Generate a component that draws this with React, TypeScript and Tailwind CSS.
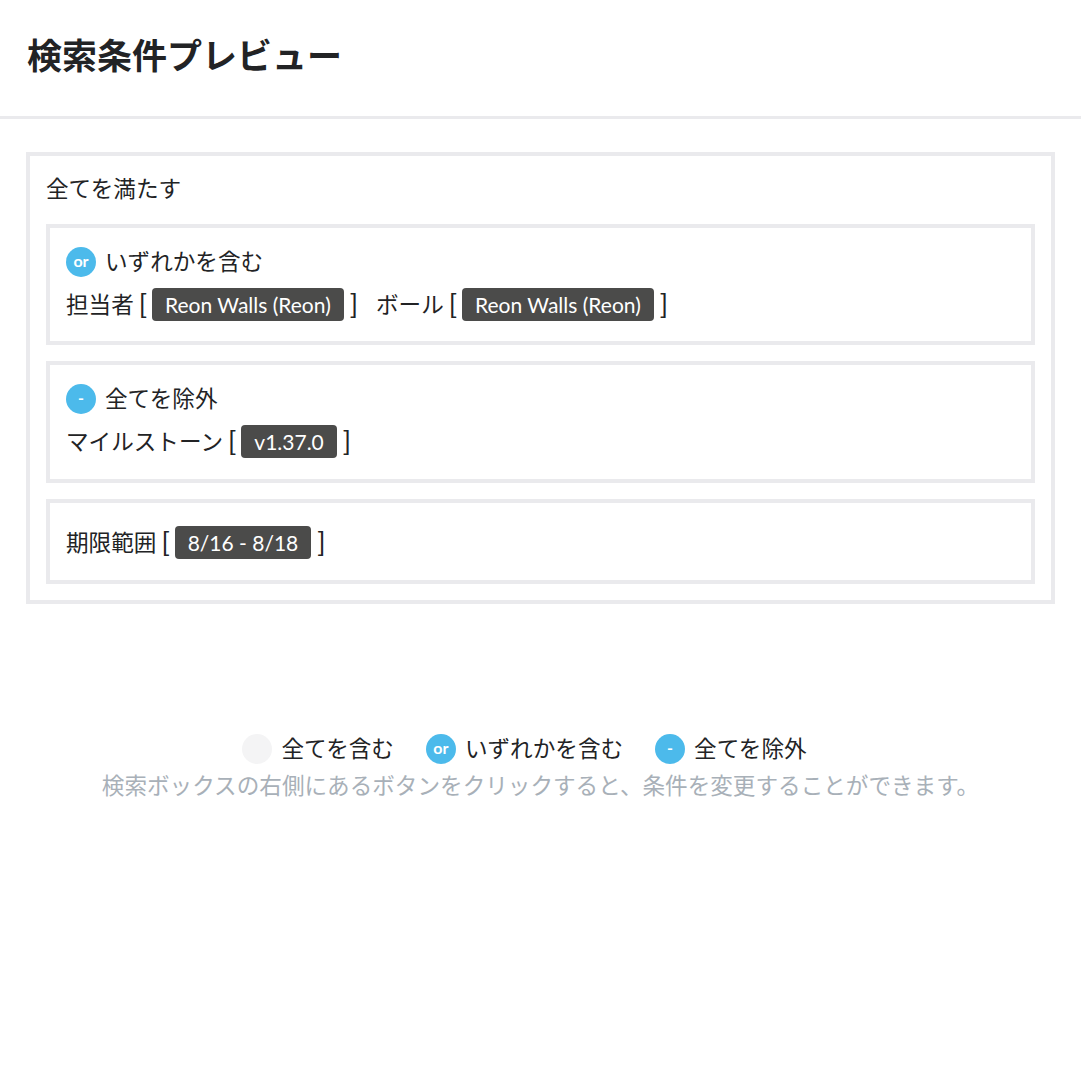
import React from 'react';

const FONT = { fontFamily: 'Lato, "Noto Sans CJK JP", sans-serif' };

function Badge({ kind }: { kind: 'and' | 'or' | 'not' }) {
  if (kind === 'and') {
    return <span className="inline-block w-[30px] h-[30px] rounded-full bg-[#f4f4f5]" />;
  }
  return (
    <span className="inline-flex items-center justify-center w-[30px] h-[30px] rounded-full bg-[#4cbaeb] text-white text-[16px] font-bold leading-none pb-[2px]">
      {kind === 'or' ? 'or' : '-'}
    </span>
  );
}

function Chip({ label }: { label: string }) {
  return (
    <span className="inline-flex items-center h-[33px] px-[13px] rounded-[4px] bg-[#4b4b4a] text-white text-[21px] leading-none">
      {label}
    </span>
  );
}

function Field({ name, value }: { name: string; value: string }) {
  return (
    <span className="inline-flex items-center">
      <span>{name}</span>
      <span className="ml-[5px] mr-[5px] text-[27px] leading-none pb-[3px]">[</span>
      <Chip label={value} />
      <span className="ml-[6px] text-[27px] leading-none pb-[3px]">]</span>
    </span>
  );
}

export default function App() {
  return (
    <div className="min-h-screen bg-white text-[#222325]" style={FONT}>
      {/* Header */}
      <div className="px-[27px] pt-[30px] pb-[35px] border-b-[3px] border-[#eaeaed]">
        <h1 className="text-[35px] font-bold leading-[51px]">検索条件プレビュー</h1>
      </div>

      {/* Preview */}
      <div className="mx-[26px] mt-[33px] border-[4px] border-[#eaeaed] p-4 text-[22.6px]">
        <div className="leading-[34px] mb-[18px]">全てを満たす</div>

        <div className="flex flex-col gap-4">
          <div className="border-[4px] border-[#eaeaed] px-4 pt-4 pb-[15px]">
            <div className="flex items-center gap-[9px] h-9">
              <Badge kind="or" />
              <span>いずれかを含む</span>
            </div>
            <div className="flex items-center gap-[18px] h-[42px] mt-1">
              <Field name="担当者" value="Reon Walls (Reon)" />
              <Field name="ボール" value="Reon Walls (Reon)" />
            </div>
          </div>

          <div className="border-[4px] border-[#eaeaed] px-4 pt-4 pb-[16px]">
            <div className="flex items-center gap-[9px] h-9">
              <Badge kind="not" />
              <span>全てを除外</span>
            </div>
            <div className="flex items-center h-[42px] mt-1">
              <Field name="マイルストーン" value="v1.37.0" />
            </div>
          </div>

          <div className="border-[4px] border-[#eaeaed] px-4 pt-[19px] pb-4">
            <div className="flex items-center h-[42px]">
              <Field name="期限範囲" value="8/16 - 8/18" />
            </div>
          </div>
        </div>
      </div>

      {/* Legend */}
      <div className="mt-[128px] flex flex-col items-center text-[22.6px]">
        <div className="flex items-center gap-[32px] pr-[32px]">
          <span className="flex items-center gap-[9px]">
            <Badge kind="and" />
            <span>全てを含む</span>
          </span>
          <span className="flex items-center gap-[9px]">
            <Badge kind="or" />
            <span>いずれかを含む</span>
          </span>
          <span className="flex items-center gap-[9px]">
            <Badge kind="not" />
            <span>全てを除外</span>
          </span>
        </div>
        <p className="mt-[3px] text-[#a8b0b8] leading-[34px]">
          検索ボックスの右側にあるボタンをクリックすると、条件を変更することができます。
        </p>
      </div>
    </div>
  );
}
